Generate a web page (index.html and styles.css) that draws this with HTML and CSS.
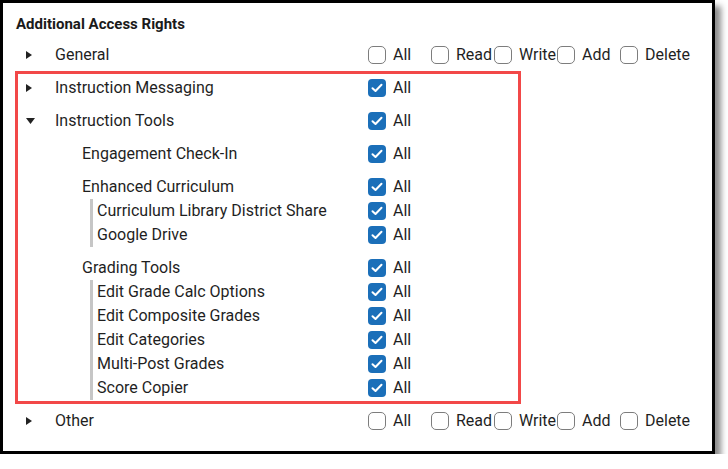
FILE: index.html
```html
<!DOCTYPE html>
<html>
<head>
<meta charset="utf-8">
<link rel="stylesheet" href="styles.css">
</head>
<body>
<div class="panel">
  <div class="title">Additional Access Rights</div>
  <div class="list">
    <div class="row">
      <div class="label"><span class="tw"><svg width="6" height="8" viewBox="0 0 6 8"><polygon points="0,0 6,4 0,8" fill="#222"/></svg></span>General</div>
      <div class="checks">
        <span class="opt"><span class="cb"></span>All</span>
        <span class="opt"><span class="cb"></span>Read</span>
        <span class="opt"><span class="cb"></span>Write</span>
        <span class="opt"><span class="cb"></span>Add</span>
        <span class="opt"><span class="cb"></span>Delete</span>
      </div>
    </div>
    <div class="row">
      <div class="label"><span class="tw"><svg width="6" height="8" viewBox="0 0 6 8"><polygon points="0,0 6,4 0,8" fill="#222"/></svg></span>Instruction Messaging</div>
      <div class="checks"><span class="opt"><span class="cb on"><svg width="12" height="10" viewBox="0 0 12 10"><path d="M1.5 5.2 L4.5 8 L10.5 1.8" fill="none" stroke="#fff" stroke-width="2" stroke-linecap="round" stroke-linejoin="round"/></svg></span>All</span></div>
    </div>
    <div class="row">
      <div class="label"><span class="tw"><svg width="9" height="6" viewBox="0 0 9 6"><polygon points="0,0 9,0 4.5,6" fill="#222"/></svg></span>Instruction Tools</div>
      <div class="checks"><span class="opt"><span class="cb on"><svg width="12" height="10" viewBox="0 0 12 10"><path d="M1.5 5.2 L4.5 8 L10.5 1.8" fill="none" stroke="#fff" stroke-width="2" stroke-linecap="round" stroke-linejoin="round"/></svg></span>All</span></div>
    </div>
    <div class="row">
      <div class="label sub">Engagement Check-In</div>
      <div class="checks"><span class="opt"><span class="cb on"><svg width="12" height="10" viewBox="0 0 12 10"><path d="M1.5 5.2 L4.5 8 L10.5 1.8" fill="none" stroke="#fff" stroke-width="2" stroke-linecap="round" stroke-linejoin="round"/></svg></span>All</span></div>
    </div>
    <div class="group">
      <div class="row">
        <div class="label sub">Enhanced Curriculum</div>
        <div class="checks"><span class="opt"><span class="cb on"><svg width="12" height="10" viewBox="0 0 12 10"><path d="M1.5 5.2 L4.5 8 L10.5 1.8" fill="none" stroke="#fff" stroke-width="2" stroke-linecap="round" stroke-linejoin="round"/></svg></span>All</span></div>
      </div>
      <div class="row">
        <div class="label child">Curriculum Library District Share</div>
        <div class="checks"><span class="opt"><span class="cb on"><svg width="12" height="10" viewBox="0 0 12 10"><path d="M1.5 5.2 L4.5 8 L10.5 1.8" fill="none" stroke="#fff" stroke-width="2" stroke-linecap="round" stroke-linejoin="round"/></svg></span>All</span></div>
      </div>
      <div class="row">
        <div class="label child">Google Drive</div>
        <div class="checks"><span class="opt"><span class="cb on"><svg width="12" height="10" viewBox="0 0 12 10"><path d="M1.5 5.2 L4.5 8 L10.5 1.8" fill="none" stroke="#fff" stroke-width="2" stroke-linecap="round" stroke-linejoin="round"/></svg></span>All</span></div>
      </div>
    </div>
    <div class="group">
      <div class="row">
        <div class="label sub">Grading Tools</div>
        <div class="checks"><span class="opt"><span class="cb on"><svg width="12" height="10" viewBox="0 0 12 10"><path d="M1.5 5.2 L4.5 8 L10.5 1.8" fill="none" stroke="#fff" stroke-width="2" stroke-linecap="round" stroke-linejoin="round"/></svg></span>All</span></div>
      </div>
      <div class="row">
        <div class="label child">Edit Grade Calc Options</div>
        <div class="checks"><span class="opt"><span class="cb on"><svg width="12" height="10" viewBox="0 0 12 10"><path d="M1.5 5.2 L4.5 8 L10.5 1.8" fill="none" stroke="#fff" stroke-width="2" stroke-linecap="round" stroke-linejoin="round"/></svg></span>All</span></div>
      </div>
      <div class="row">
        <div class="label child">Edit Composite Grades</div>
        <div class="checks"><span class="opt"><span class="cb on"><svg width="12" height="10" viewBox="0 0 12 10"><path d="M1.5 5.2 L4.5 8 L10.5 1.8" fill="none" stroke="#fff" stroke-width="2" stroke-linecap="round" stroke-linejoin="round"/></svg></span>All</span></div>
      </div>
      <div class="row">
        <div class="label child">Edit Categories</div>
        <div class="checks"><span class="opt"><span class="cb on"><svg width="12" height="10" viewBox="0 0 12 10"><path d="M1.5 5.2 L4.5 8 L10.5 1.8" fill="none" stroke="#fff" stroke-width="2" stroke-linecap="round" stroke-linejoin="round"/></svg></span>All</span></div>
      </div>
      <div class="row">
        <div class="label child">Multi-Post Grades</div>
        <div class="checks"><span class="opt"><span class="cb on"><svg width="12" height="10" viewBox="0 0 12 10"><path d="M1.5 5.2 L4.5 8 L10.5 1.8" fill="none" stroke="#fff" stroke-width="2" stroke-linecap="round" stroke-linejoin="round"/></svg></span>All</span></div>
      </div>
      <div class="row">
        <div class="label child">Score Copier</div>
        <div class="checks"><span class="opt"><span class="cb on"><svg width="12" height="10" viewBox="0 0 12 10"><path d="M1.5 5.2 L4.5 8 L10.5 1.8" fill="none" stroke="#fff" stroke-width="2" stroke-linecap="round" stroke-linejoin="round"/></svg></span>All</span></div>
      </div>
    </div>
    <div class="row">
      <div class="label"><span class="tw"><svg width="6" height="8" viewBox="0 0 6 8"><polygon points="0,0 6,4 0,8" fill="#222"/></svg></span>Other</div>
      <div class="checks">
        <span class="opt"><span class="cb"></span>All</span>
        <span class="opt"><span class="cb"></span>Read</span>
        <span class="opt"><span class="cb"></span>Write</span>
        <span class="opt"><span class="cb"></span>Add</span>
        <span class="opt"><span class="cb"></span>Delete</span>
      </div>
    </div>
  </div>
  <div class="highlight"></div>
</div>
</body>
</html>
```
FILE: styles.css
```css
html, body {
  margin: 0;
  padding: 0;
  background: #fff;
}
body {
  font-family: Roboto, "Liberation Sans", sans-serif;
  color: #1f1f1f;
}
.panel {
  position: relative;
  box-sizing: border-box;
  width: 715px;
  height: 454px;
  border: 3px solid #000;
  background: #fff;
  box-shadow: 6px 6px 6px rgba(0, 0, 0, 0.45);
  padding: 11px 0 0 13px;
}
.title {
  font-size: 15px;
  font-weight: 700;
  line-height: 20px;
  color: #1a1a1a;
  margin-bottom: 9px;
}
.list {
  display: flex;
  flex-direction: column;
  gap: 9px;
  padding-left: 10px;
}
.group {
  display: flex;
  flex-direction: column;
}
.row {
  display: grid;
  grid-template-columns: 342px auto;
  height: 24px;
  font-size: 16px;
  line-height: 24px;
}
.label {
  display: flex;
  align-items: center;
  white-space: nowrap;
}
.tw {
  width: 29px;
  display: flex;
  align-items: center;
}
.label.sub {
  padding-left: 56px;
}
.label.child {
  margin-left: 64px;
  border-left: 3px solid #c6c6c6;
  padding-left: 4px;
}
.checks {
  display: grid;
  grid-template-columns: repeat(5, 63px);
  align-items: center;
}
.opt {
  display: flex;
  align-items: center;
  gap: 7px;
  white-space: nowrap;
}
.cb {
  box-sizing: border-box;
  width: 18px;
  height: 18px;
  border: 1px solid #7d7d7d;
  border-radius: 5px;
  background: #fff;
  display: flex;
  align-items: center;
  justify-content: center;
  flex: none;
}
.cb.on {
  border: none;
  border-radius: 4px;
  background: #1b6fb9;
}
.highlight {
  position: absolute;
  left: 12px;
  top: 68px;
  width: 506px;
  height: 333px;
  box-sizing: border-box;
  border: 3px solid #f24848;
  pointer-events: none;
}
```
